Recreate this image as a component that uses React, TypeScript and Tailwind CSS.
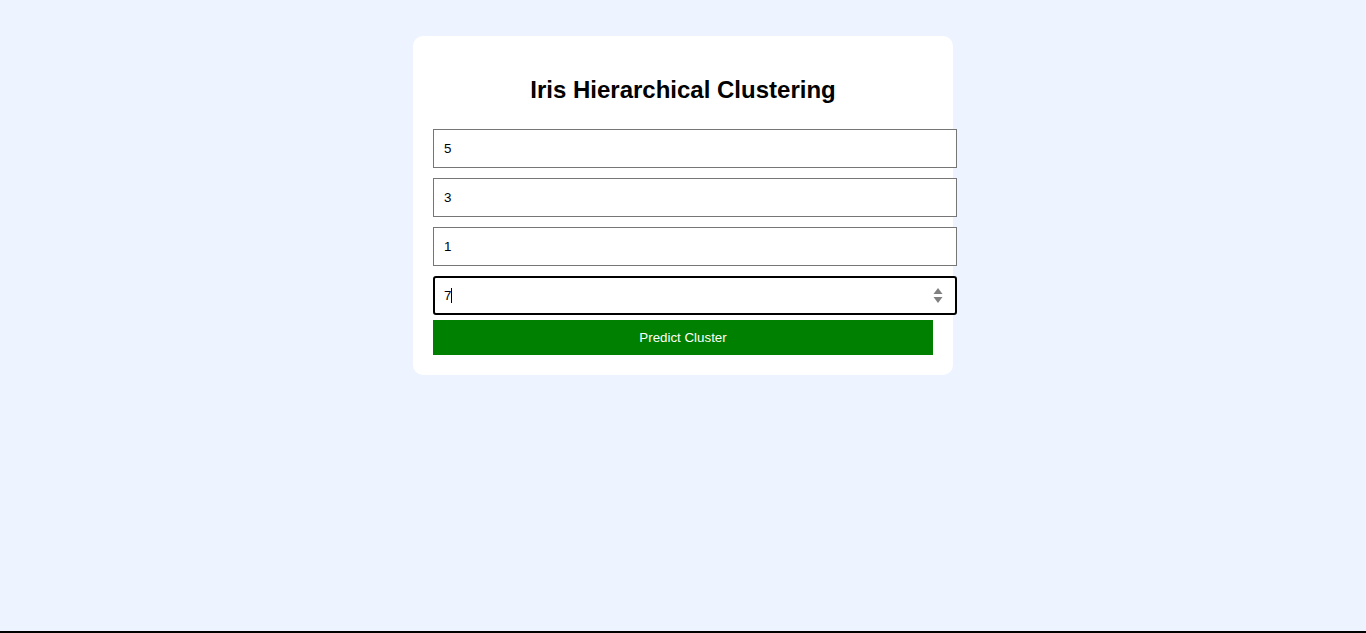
import React from 'react';

const App: React.FC = () => {
  const values = ['5', '3', '1'];
  return (
    <div className="h-[633px] box-border bg-[#edf4ff] border-b-2 border-black font-['Liberation_Sans',Arial,sans-serif]">
      <div className="flex justify-center pt-[36px]">
        <div className="w-[540px] bg-white rounded-[10px] px-5 pt-5 pb-5">
          <h2 className="mt-5 mb-[25px] text-center text-[24px] leading-[28px] font-bold text-black">
            Iris Hierarchical Clustering
          </h2>
          <div className="flex flex-col gap-[10px]">
            {values.map((v, i) => (
              <input
                key={i}
                type="text"
                readOnly
                value={v}
                className="w-[524px] h-[39px] box-border border border-[#767676] px-[10px] text-[13.33px] text-black bg-white outline-none"
              />
            ))}
            <div className="relative w-[524px] h-[39px] box-border border-2 border-black rounded-[3px] pl-[9px] flex items-center text-[13.33px] text-black bg-white">
              <span>7</span>
              <span className="w-px h-[15px] bg-black"></span>
              <svg className="absolute right-[12px] top-[9px]" width="10" height="17" viewBox="0 0 10 17">
                <path d="M5 1 L9.5 7 H0.5 Z" fill="#808080" />
                <path d="M0.5 10 H9.5 L5 16 Z" fill="#808080" />
              </svg>
            </div>
          </div>
          <button className="mt-[5px] w-[500px] h-[35px] bg-[#008000] text-white text-[13.33px] block">
            Predict Cluster
          </button>
        </div>
      </div>
    </div>
  );
};

export default App;
